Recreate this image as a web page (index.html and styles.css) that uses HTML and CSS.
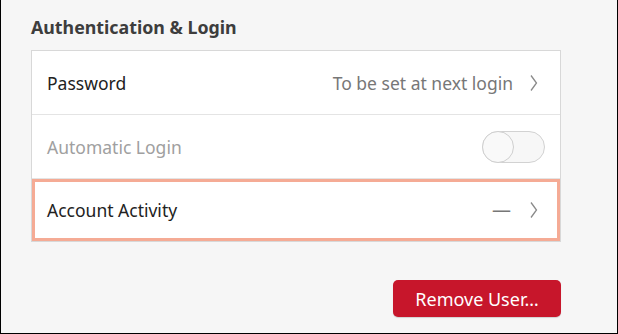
FILE: index.html
```html
<!DOCTYPE html>
<html lang="en">
<head>
    <meta charset="UTF-8">
    <meta name="viewport" content="width=device-width, initial-scale=1.0">
    <title>User Settings - Authentication</title>
    <link rel="stylesheet" href="styles.css">
</head>
<body>
    <div class="window">
        <section class="group">
            <h2 class="group-title">Authentication &amp; Login</h2>
            <div class="list">
                <div class="row">
                    <span class="row-title">Password</span>
                    <span class="row-value">To be set at next login</span>
                    <svg class="chevron" width="10" height="18" viewBox="0 0 10 18">
                        <path d="M2 1.5 L7.5 9 L2 16.5" fill="none" stroke="#8a8a8a" stroke-width="1.3"/>
                    </svg>
                </div>
                <div class="row disabled">
                    <span class="row-title">Automatic Login</span>
                    <span class="switch"><span class="knob"></span></span>
                </div>
                <div class="row focused">
                    <span class="row-title">Account Activity</span>
                    <span class="row-value dash">—</span>
                    <svg class="chevron" width="10" height="18" viewBox="0 0 10 18">
                        <path d="M2 1.5 L7.5 9 L2 16.5" fill="none" stroke="#8a8a8a" stroke-width="1.3"/>
                    </svg>
                </div>
            </div>
        </section>

        <div class="actions">
            <button class="destructive-button">Remove User…</button>
        </div>
    </div>
</body>
</html>
```

FILE: styles.css
```css
body {
    margin: 0;
    font-family: "Noto Sans", "DejaVu Sans", sans-serif;
    background: #f6f6f6;
}

.window {
    box-sizing: border-box;
    width: 618px;
    height: 334px;
    border: 1px solid #000;
    border-top: none;
    background: #f6f6f6;
    padding: 14px 0 0 30px;
}

.group {
    width: 530px;
}

.group-title {
    margin: 0 0 10px 0;
    font-size: 17.8px;
    font-weight: bold;
    color: #3d3d3d;
    line-height: 26px;
}

.list {
    background: white;
    border: 1px solid #d8d8d8;
}

.row {
    box-sizing: border-box;
    height: 64px;
    display: flex;
    align-items: center;
    padding: 0 21px 0 15px;
    border-bottom: 1px solid #e4e4e4;
    font-size: 17.5px;
}

.row:last-child {
    border-bottom: none;
    height: 62px;
}

.row-title {
    flex: 1;
    color: #222;
}

.row-value {
    color: #777;
    margin-right: 16px;
}

.row-value.dash {
    font-size: 19px;
    margin-right: 18px;
}

.row.disabled .row-title {
    color: #a0a0a0;
}

.row.focused {
    box-shadow: inset 0 0 0 3px #f5ab95;
}

.chevron {
    display: block;
}

.switch {
    box-sizing: border-box;
    position: relative;
    width: 63px;
    height: 32px;
    margin-right: -6px;
    border: 1px solid #d2d2d2;
    border-radius: 16px;
    background: #f7f7f7;
}

.knob {
    box-sizing: border-box;
    position: absolute;
    left: -1px;
    top: -1px;
    width: 32px;
    height: 32px;
    border-radius: 50%;
    border: 1px solid #cfcfcf;
    background: #f9f9f9;
}

.actions {
    width: 530px;
    display: flex;
    justify-content: flex-end;
    margin-top: 38px;
}

.destructive-button {
    width: 168px;
    height: 37px;
    border: none;
    border-radius: 5px;
    background: #c7162b;
    color: white;
    font-family: "Noto Sans", "DejaVu Sans", sans-serif;
    font-size: 18px;
    box-shadow: 0 1px 1px rgba(0,0,0,0.15);
}
```
